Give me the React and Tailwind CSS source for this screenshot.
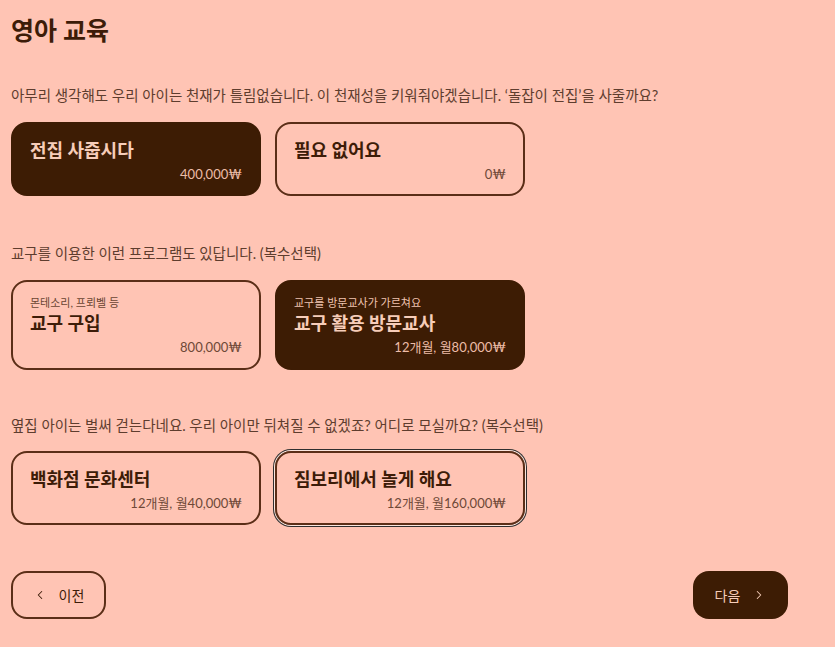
import React, { useState } from 'react';
import { ChevronLeft, ChevronRight } from 'lucide-react';

const FONT = { fontFamily: 'Lato, "Noto Sans CJK KR", sans-serif' };

// Option card: dark when selected, outlined otherwise
const OptionCard = ({ title, sub, price, selected, focused, tall }) => {
  return (
    <button
      className={`w-[250px] ${tall ? 'h-[90px]' : 'h-[74px]'} rounded-2xl border-2 px-[17px] text-left flex flex-col ${
        tall ? 'pt-[13px]' : 'pt-[14px]'
      } ${
        selected
          ? 'bg-[#3d1c04] border-[#3d1c04] text-[#f7cdb9]'
          : 'bg-transparent border-[#5b2e17] text-[#3d1c08]'
      } ${focused ? 'shadow-[0_0_0_1px_#fbe6de,0_0_0_2px_#2f2f2f]' : ''}`}
    >
      {sub && (
        <span className={`text-[11px] leading-4 ${selected ? 'text-[#f0c4b0]' : 'text-[#6a4432]'}`}>{sub}</span>
      )}
      <span className="text-[18px] leading-6 font-bold">{title}</span>
      <span
        className={`text-[13px] leading-5 self-end mt-[2px] ${selected ? 'text-[#eebda8]' : 'text-[#6e4837]'}`}
      >
        {price}
      </span>
    </button>
  );
};

const App = () => {
  const [step] = useState(3);

  return (
    <div className="min-h-[647px] w-full bg-[#ffc4b4] px-[11px] pt-3 text-[#3d1c08]" style={FONT}>
      <h1 className="text-[25px] leading-9 font-bold">영아 교육</h1>

      {/* 전집 */}
      <section className="mt-[38px]">
        <p className="text-[14.5px] leading-5 text-[#5e3d2e]">
          아무리 생각해도 우리 아이는 천재가 틀림없습니다. 이 천재성을 키워줘야겠습니다. ‘돌잡이 전집’을 사줄까요?
        </p>
        <div className="mt-4 flex gap-[14px]">
          <OptionCard title="전집 사줍시다" price="400,000₩" selected />
          <OptionCard title="필요 없어요" price="0₩" />
        </div>
      </section>

      {/* 교구 */}
      <section className="mt-12">
        <p className="text-[14.5px] leading-5 text-[#5e3d2e]">교구를 이용한 이런 프로그램도 있답니다. (복수선택)</p>
        <div className="mt-4 flex gap-[14px]">
          <OptionCard tall sub="몬테소리, 프뢰벨 등" title="교구 구입" price="800,000₩" />
          <OptionCard tall sub="교구를 방문교사가 가르쳐요" title="교구 활용 방문교사" price="12개월, 월80,000₩" selected />
        </div>
      </section>

      {/* 문화센터 */}
      <section className="mt-[46px]">
        <p className="text-[14.5px] leading-5 text-[#5e3d2e]">
          옆집 아이는 벌써 걷는다네요. 우리 아이만 뒤쳐질 수 없겠죠? 어디로 모실까요? (복수선택)
        </p>
        <div className="mt-[15px] flex gap-[14px]">
          <OptionCard title="백화점 문화센터" price="12개월, 월40,000₩" />
          <OptionCard title="짐보리에서 놀게 해요" price="12개월, 월160,000₩" focused={step === 3} />
        </div>
      </section>

      {/* 이동 버튼 */}
      <div className="mt-[46px] flex justify-between w-[777px]">
        <button className="h-12 w-[95px] rounded-2xl border-2 border-[#5b2e17] flex items-center justify-center gap-3 text-[14px] text-[#3d1c08]">
          <ChevronLeft size={14} strokeWidth={1.75} />
          <span>이전</span>
        </button>
        <button className="h-12 w-[95px] rounded-2xl bg-[#3d1c04] flex items-center justify-center gap-3 text-[14px] text-[#f7cdb9]">
          <span>다음</span>
          <ChevronRight size={14} strokeWidth={1.75} />
        </button>
      </div>
    </div>
  );
};

export default App;
